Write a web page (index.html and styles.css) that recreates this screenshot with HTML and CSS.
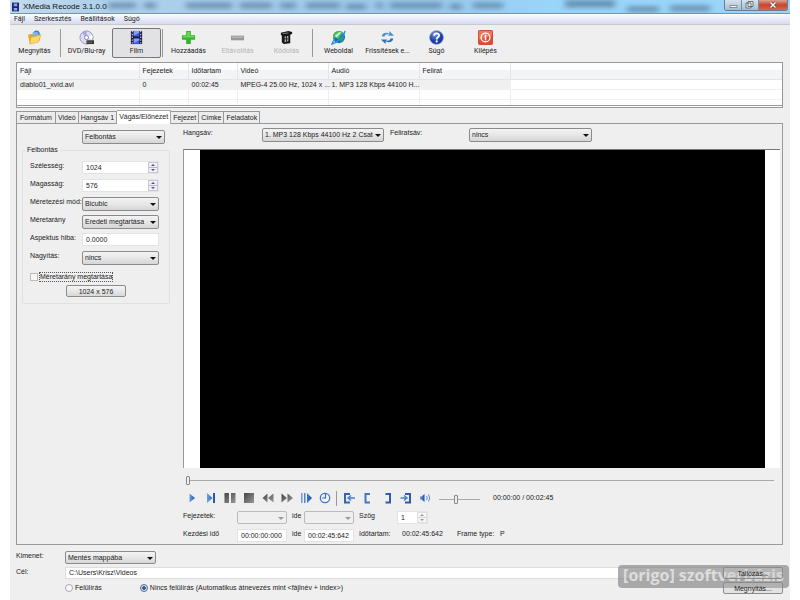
FILE: index.html
```html
<!DOCTYPE html>
<html lang="hu">
<head>
<meta charset="utf-8">
<title>XMedia Recode 3.1.0.0</title>
<link rel="stylesheet" href="styles.css">
</head>
<body>
<svg class="defs" aria-hidden="true">
  <defs>
    <linearGradient id="blue" x1="0" x2="1"><stop offset="0" stop-color="#6da2e4"/><stop offset="1" stop-color="#1d4fa5"/></linearGradient>
    <linearGradient id="gray" x1="0" x2="1" y2="1"><stop offset="0" stop-color="#444"/><stop offset="1" stop-color="#999"/></linearGradient>
    <radialGradient id="ball" cx=".4" cy=".25"><stop offset="0" stop-color="#7c9be8"/><stop offset="1" stop-color="#1b3ba2"/></radialGradient>
  </defs>
</svg>
<div class="window">
  <header class="titlebar">
    <svg class="glass" preserveAspectRatio="none" viewBox="0 0 780 14" aria-hidden="true">
      <g class="smudge">
        <path d="M98 6h28M134 6h12M176 6h46M230 6h32M270 6h16M296 6h34M336 7h20M366 6h7M380 6h52M440 7h12M463 6h30"/>
        <path class="wide" d="M555 4h50"/><path d="M617 10h32M660 9h40"/>
      </g>
    </svg>
    <svg class="app-icon" viewBox="0 0 8 10"><path fill="#17266e" d="M0 0h8v10H0z"/><path fill="#8fa4ec" d="M2 1h4v3H2zM2 6h4v3H2z"/></svg>
    <h1>XMedia Recode 3.1.0.0</h1>
    <div class="caption">
      <button aria-label="Kis méret"><svg viewBox="0 0 16 10"><path d="M5 5.500h7v2H5z" fill="#fff" stroke="#666" stroke-width=".7"/></svg></button>
      <button aria-label="Előző méret"><svg viewBox="0 0 16 10"><path d="M6 1.500h5v5H6zM4 3h5v5H4z" fill="#eee" stroke="#555" stroke-width=".8"/></svg></button>
      <button class="close" aria-label="Bezárás"><svg viewBox="0 0 16 10"><path d="M5.500 2.500l5 5m0-5l-5 5" stroke="#633" stroke-width="2.500"/><path d="M5.500 2.500l5 5m0-5l-5 5" stroke="#fff" stroke-width="1.500"/></svg></button>
    </div>
  </header>
  <nav class="menu"><button>Fájl</button><button>Szerkesztés</button><button>Beállítások</button><button>Súgó</button></nav>
  <div class="toolbar">
    <button><svg viewBox="0 0 16 16"><path d="M1 5l5-1 1 1 6-1 1 7-11 4z" fill="#e3a92e"/><path d="M6 2l6-1 2 8-7 2z" fill="#75b8e8"/><path d="M4 8l11-3-3 8-9 2z" fill="#ffd867" stroke="#d39c2a" stroke-width=".5"/><path d="M8 2c3-2 5 0 5 3" stroke="#2e7fb9" stroke-width="1.500" fill="none"/></svg>Megnyitás</button>
    <i class="sep"></i>
    <button><svg viewBox="0 0 16 16"><circle cx="8" cy="8" r="7" fill="#dcdcf2" stroke="#9595bd"/><path d="M8 8L3 3a7 7 0 0 1 5-2z" fill="#a5a5e8"/><path d="M8 8l6-3a7 7 0 0 1 0 5z" fill="#fff"/><circle cx="8" cy="8" r="2.200" fill="#fff" stroke="#777fb0"/><path d="M8 11h8v4H8z" fill="#333"/><path d="M9 13h6" stroke="#aaa" stroke-dasharray="1"/></svg>DVD/Blu-ray</button>
    <button class="active"><svg viewBox="0 0 16 16"><path d="M2 1h12v14H2z" fill="#111638"/><path d="M5 1h6v6H5zM5 9h6v6H5z" fill="#3b5be6"/><path d="M5 1h6v2L5 6zM5 9h6v2l-6 3z" fill="#859cf6"/><path d="M3.500 1v14m9-14v14" stroke="#ddd" stroke-width="1.200" stroke-dasharray="1.500 1.500"/></svg>Film</button>
    <i class="sep"></i>
    <button><svg viewBox="0 0 16 16"><path d="M5.500 1h5v4.500H15v5h-4.500V15h-5v-4.500H1v-5h4.500z" fill="#34b52e"/><path d="M6.500 2h3v4.500H14V8H2V6.500h4.500z" fill="#68d957"/></svg>Hozzáadás</button>
    <button disabled><svg viewBox="0 0 16 16"><path d="M1 6h14v5H1z" fill="#999"/><path d="M2 7h12v1.500H2z" fill="#b7b7b7"/></svg>Eltávolítás</button>
    <button disabled><svg viewBox="0 0 16 16"><path d="M2 3l8-2 4 1v2l-2 1v9l-7 1-2-2V6L2 5z" fill="#161616"/><path d="M6 7l4-1v6l-4 1z" fill="#aaa"/><path d="M8 6v7M5 9.500h5" stroke="#222"/><path d="M4 4l6-1" stroke="#888" fill="none"/></svg>Kódolás</button>
    <i class="sep"></i>
    <button><svg viewBox="0 0 16 16"><circle cx="8.500" cy="7.500" r="6.500" fill="#1870b8"/><path d="M4 3c3-3 7-2 9 0l-3 3-2 4-3-2-3 1c0-3 1-5 2-6z" fill="#51be54"/><path d="M10 9l4-2c0 4-2 6-4 7z" fill="#2a9d68"/><path d="M4 6l5-4 2 1-5 5z" fill="#b9f0d8"/><path d="M15 1C14 7 6 14 1 15c1-3 2-4 3-5" fill="none" stroke="#2696da" stroke-width="1.500"/></svg>Weboldal</button>
    <button><svg viewBox="0 0 16 16"><path d="M2 7c0-4 5-5 8-3V1l5 5h-7l2-1C7 4 5 5 5 7z" fill="#4591da"/><path d="M14 9c0 4-5 5-8 3v3l-5-5h7l-2 1c3 1 5 0 5-2z" fill="#286fb9"/></svg>Frissítések e...</button>
    <button><svg viewBox="0 0 16 16"><circle cx="8" cy="8" r="7.300" fill="url(#ball)" stroke="#6d82bf" stroke-width=".7"/><path d="M5.500 6.200C5.500 2.800 11 3 10.700 6 10.500 8 8.200 7.700 8.200 10" fill="none" stroke="#fff" stroke-width="1.900"/><circle cx="8.200" cy="12.200" r="1.200" fill="#fff"/></svg>Súgó</button>
    <button><svg viewBox="0 0 16 16"><rect x=".5" y=".5" width="15" height="15" rx="1" fill="#e24c31" stroke="#c74831"/><path d="M1 1h14v5L1 10z" fill="#ef765a"/><circle cx="8" cy="8" r="4.700" fill="none" stroke="#fff" stroke-width="1.400"/><path d="M8 5v6" stroke="#fff" stroke-width="1.600"/></svg>Kilépés</button>
  </div>
  <main>
    <div class="files">
      <table>
        <colgroup><col class="c-file"><col class="c-small"><col class="c-small"><col class="c-wide"><col class="c-wide"><col class="c-wide"><col></colgroup>
        <thead><tr><th>Fájl</th><th>Fejezetek</th><th>Időtartam</th><th>Videó</th><th>Audió</th><th>Felirat</th><th></th></tr></thead>
        <tbody>
          <tr class="picked"><td>diablo01_xvid.avi</td><td>0</td><td>00:02:45</td><td>MPEG-4 25.00 Hz, 1024 x ...</td><td>1. MP3 128 Kbps 44100 H...</td><td></td><td></td></tr>
          <tr><td></td><td></td><td></td><td></td><td></td><td></td><td></td></tr>
          <tr><td></td><td></td><td></td><td></td><td></td><td></td><td></td></tr>
        </tbody>
      </table>
    </div>
    <div class="tabs" role="tablist">
      <button role="tab">Formátum</button><button role="tab">Videó</button><button role="tab">Hangsáv 1</button><button role="tab" class="current" aria-selected="true">Vágás/Előnézet</button><button role="tab">Fejezet</button><button role="tab">Címke</button><button role="tab">Feladatok</button>
    </div>
    <section class="page">
      <aside>
        <span class="drop mode"><select aria-label="Beállítás"><option>Felbontás</option></select></span>
        <fieldset>
          <legend>Felbontás</legend>
          <div class="form">
            <label for="w">Szélesség:</label><span class="spin"><input id="w" value="1024"><i></i></span>
            <label for="h">Magasság:</label><span class="spin"><input id="h" value="576"><i></i></span>
            <label for="m">Méretezési mód:</label><span class="drop"><select id="m"><option>Bicubic</option></select></span>
            <label for="r">Méretarány</label><span class="drop"><select id="r"><option>Eredeti megtartása</option></select></span>
            <label for="a">Aspektus hiba:</label><input id="a" value="0.0000">
            <label for="z">Nagyítás:</label><span class="drop"><select id="z"><option>nincs</option></select></span>
          </div>
          <label class="keep"><input type="checkbox"><span>Méretarány megtartása</span></label>
          <button class="push size">1024 x 576</button>
        </fieldset>
      </aside>
      <div class="preview">
        <div class="tracks">
          <label for="au">Hangsáv:</label><span class="drop"><select id="au"><option>1. MP3 128 Kbps 44100 Hz 2 Csatorna</option></select></span>
          <label for="su">Feliratsáv:</label><span class="drop"><select id="su"><option>nincs</option></select></span>
        </div>
        <div class="video"><div></div></div>
        <input class="seek" type="range" value="0" aria-label="Pozíció">
        <div class="player">
          <button aria-label="Lejátszás"><svg viewBox="0 0 14 12"><path d="M4.500 1.500L10 6l-5.500 4.500z" fill="url(#blue)"/></svg></button>
          <button aria-label="Következő képkocka"><svg viewBox="0 0 14 12"><path d="M3 1l5.500 5L3 11zM9 1h2v10H9z" fill="url(#blue)"/></svg></button>
          <button aria-label="Szünet"><svg viewBox="0 0 14 12"><path d="M1.500 1H6v10H1.500zM8 1h4.500v10H8z" fill="url(#gray)"/></svg></button>
          <button aria-label="Leállítás"><svg viewBox="0 0 14 12"><path d="M2 1h10v10H2z" fill="url(#gray)"/></svg></button>
          <button aria-label="Vissza"><svg viewBox="0 0 14 12"><path d="M6.500 1.500v9L1.500 6zM12.500 1.500v9L7 6z" fill="url(#gray)"/></svg></button>
          <button aria-label="Előre"><svg viewBox="0 0 14 12"><path d="M1.500 1.500v9L7 6zM7.500 1.500v9L13 6z" fill="url(#gray)"/></svg></button>
          <button aria-label="Lassítás"><svg viewBox="0 0 14 12"><path d="M2 1h1.500v10H2zM5 1h1.500v10H5zM8 1l5 5-5 5z" fill="url(#blue)"/></svg></button>
          <button aria-label="Idő"><svg viewBox="0 0 14 12"><circle cx="7" cy="6" r="4.700" fill="#f3f7ff" stroke="#4373bf" stroke-width="1.300"/><path d="M7.500 1.500V6H4" fill="none" stroke="#3568b9" stroke-width="1.200"/></svg></button>
          <i class="sep"></i>
          <button aria-label="Ugrás a kezdetre"><svg viewBox="0 0 14 12"><path d="M8 2H3v8.500h5" fill="none" stroke="#3467b2" stroke-width="2"/><path d="M13 6H6m3-2.500L6 6l3 2.500" fill="none" stroke="#4d80cc" stroke-width="1.500"/></svg></button>
          <button aria-label="Kezdőpont"><svg viewBox="0 0 14 12"><path d="M9 2H4.500v8.500H9" fill="none" stroke="#4277c4" stroke-width="2"/></svg></button>
          <button aria-label="Végpont"><svg viewBox="0 0 14 12"><path d="M5.500 2H10v8.500H5.500" fill="none" stroke="#2f5ca8" stroke-width="2"/></svg></button>
          <button aria-label="Ugrás a végére"><svg viewBox="0 0 14 12"><path d="M6 2h5v8.500H6" fill="none" stroke="#2f5ca8" stroke-width="2"/><path d="M1.500 6H8M5 3.500L8 6 5 8.500" fill="none" stroke="#4d80cc" stroke-width="1.500"/></svg></button>
          <button aria-label="Hangerő"><svg viewBox="0 0 14 12"><path d="M2 4.500h1.500l3-2.500v8l-3-2.500H2z" fill="url(#blue)"/><path d="M8.500 4q1.500 2 0 4M10.500 2.500q2.500 3.500 0 7" fill="none" stroke="#5b8cd2"/></svg></button>
          <input class="volume" type="range" value="40" aria-label="Hangerő szintje">
          <span class="clock">00:00:00 / 00:02:45</span>
        </div>
        <div class="cuts">
          <label for="c1">Fejezetek:</label><span class="drop off"><select id="c1" disabled></select></span>
          <label for="c2">ide</label><span class="drop off"><select id="c2" disabled></select></span>
          <label for="ang">Szög</label><span class="spin off"><input id="ang" value="1"><i></i></span>
          <span></span><span></span>
          <label for="t1">Kezdési idő</label><input id="t1" value="00:00:00:000">
          <label for="t2">ide</label><input id="t2" value="00:02:45:642">
          <span>Időtartam:</span><span>00:02:45:642</span><span>Frame type:</span><span>P</span>
        </div>
      </div>
    </section>
    <footer>
      <label for="out">Kimenet:</label><span class="drop out"><select id="out"><option>Mentés mappába</option></select></span>
      <label for="dst">Cél:</label><div class="target"><input id="dst" value="C:\Users\Krisz\Videos"><button class="push">Tallózás...</button></div>
      <span></span><div class="modes"><label><input type="radio" name="o">Felülírás</label><label><input type="radio" name="o" checked>Nincs felülírás (Automatikus átnevezés mint &lt;fájlnév + index&gt;)</label><button class="push">Megnyitás...</button></div>
    </footer>
  </main>
  <div class="watermark">[origo] szoftverbázis</div>
</div>
</body>
</html>
```
FILE: styles.css
```css
* { box-sizing: border-box; }
body { margin: 0; background: #fff; color: #222; font: 7px/10px "Liberation Sans", sans-serif; }
button, input, select { font: inherit; color: inherit; margin: 0; padding: 0; border: 0; background: none; border-radius: 0; }
.defs { position: absolute; width: 0; height: 0; }
.window { position: relative; display: flex; flex-direction: column; min-height: 100vh; margin: 0 10px; background: #efefef; }

.titlebar { position: relative; display: flex; align-items: center; height: 14px; padding-left: 2px; border-bottom: 1px solid #7793aa; background: linear-gradient(90deg, #c2dbee, #aed0eb 12%, #9bc9ec 55%, #99d5fb 70%, #9bd4f7); }
.glass { position: absolute; inset: 0; width: 100%; height: 100%; overflow: hidden; }
.smudge { fill: none; stroke: #587f9f; stroke-width: 6; filter: blur(3px); opacity: .8; }
.smudge .wide { stroke-width: 8; }
.app-icon { position: relative; width: 7px; height: 10px; }
h1 { position: relative; flex: 1; margin: 0 0 0 4px; font: 8px/12px "Liberation Sans", sans-serif; color: #111; }
.caption { position: relative; align-self: flex-start; display: flex; height: 11px; margin-right: 2px; border: 1px solid #6b7d8e; border-top: 0; border-radius: 0 0 3px 3px; overflow: hidden; }
.caption button { width: 17px; background: linear-gradient(#d5e3ef, #a6bdd0); border-right: 1px solid #788b9c; }
.caption .close { width: 28px; border: 0; background: linear-gradient(#dfa196, #c9432c 50%, #d36a50); }
.caption svg { display: block; width: 16px; height: 10px; margin: 0 auto; }

.menu { display: flex; gap: 8px; height: 11px; padding-left: 4px; border-top: 1px solid #fff; border-bottom: 1px solid #c8c8cf; background: linear-gradient(#f7f8fd, #d6dbf0); font: 7px/9px Roboto, sans-serif; }
.toolbar { display: flex; align-items: center; height: 37px; padding: 2px 0 3px; font: 7px/10px Roboto, sans-serif; }
.toolbar button { display: flex; flex-direction: column; align-items: center; justify-content: center; gap: 1px; width: 49px; height: 30px; white-space: nowrap; }
.toolbar svg { width: 15px; height: 15px; }
.toolbar .active { margin-left: 1px; border: 1px solid #777; border-radius: 2px; background: #e2e2e4; }
.toolbar :disabled { color: #b5b5b5; }
.sep { width: 1px; height: 28px; margin: 0 1px; background: #999; }

.menu button { margin-right: 1px; }

main { flex: 1; display: flex; flex-direction: column; padding: 0 7px 6px 6px; }
.files { height: 46px; border: 1px solid #999; border-bottom: 3px double #999; background: #fff; overflow: hidden; }
table { width: 100%; table-layout: fixed; border-collapse: collapse; }
.c-file { width: 122px; }
.c-small { width: 49px; }
.c-wide { width: 91px; }
th, td { height: 10px; padding: 0 0 0 3px; border-right: 1px solid #eee; border-bottom: 1px solid #f0f0f0; font-weight: 400; line-height: 9px; text-align: left; white-space: nowrap; }
th { height: 16px; background: linear-gradient(#fff 45%, #f3f4f5 46%); border-color: #e3e5e8; }
.picked td:not(:last-child) { background: #f0f0f0; }
th:last-child, td:last-child { border-right: 0; }

.tabs { display: flex; align-items: flex-end; height: 14px; margin-top: 1px; }
.tabs button { height: 12px; padding: 0 2px; border: 1px solid #999; border-left-width: 0; border-bottom: 0; background: #ececec; white-space: nowrap; }
.tabs button:first-child { padding: 0 3px; border-left-width: 1px; }
.tabs .current { height: 14px; margin-bottom: -1px; padding-bottom: 2px; background: #fff; border-color: #aaa; position: relative; }
.page { flex: 1; display: flex; gap: 13px; padding: 4px 2px 2px 5px; border: 1px solid #999; }

aside { width: 148px; display: flex; flex-direction: column; }
.drop { position: relative; display: block; height: 14px; }
.drop select { display: block; appearance: none; width: 100%; height: 100%; padding: 0 10px 0 2px; border: 1px solid #8b8b8b; border-radius: 2px; background: linear-gradient(#f3f3f3, #e7e7e7 50%, #d6d6d6); opacity: 1; overflow: hidden; }
.drop::after { content: ""; position: absolute; right: 3px; top: 6px; border: 3px solid transparent; border-top-color: #111; border-bottom: 0; pointer-events: none; }
.drop.off select { border-color: #bbb; background: #efefef; }
.drop.off::after { border-top-color: #999; }
.mode { width: 83px; margin: 2px 0 0 60px; }
fieldset { margin: 1px 0 0; padding: 6px 10px 6px 7px; border: 1px solid #e1e1e1; border-radius: 2px; min-width: 0; }
legend { padding: 0 2px; margin-left: -5px; }
.form { display: grid; grid-template-columns: 52px 1fr; grid-auto-rows: 14px; row-gap: 4px; }
.form label { white-space: nowrap; }
input:not([type]) { width: 100%; height: 13px; padding: 0 3px; border: 1px solid #e3e3e3; background: #fff; min-width: 0; }
.spin { position: relative; display: block; height: 13px; }
.spin i { position: absolute; right: 1px; top: 1px; width: 10px; height: 11px; border: 1px solid #c8c8d4; background: linear-gradient(#eef 45%, #b8b8c8 46%, #b8b8c8 54%, #eef 55%); }
.spin i::before, .spin i::after { content: ""; position: absolute; left: 2px; border: 2px solid transparent; }
.spin i::before { top: 1px; border-bottom-color: #557; border-top: 0; }
.spin i::after { bottom: 1px; border-top-color: #557; border-bottom: 0; }
.spin.off i { filter: grayscale(1) opacity(.6); }
.keep { display: flex; align-items: center; gap: 2px; margin-top: 8px; }
.keep input { appearance: none; width: 8px; height: 8px; border: 1px solid #bbb; background: #f6f6f6; }
.keep span { outline: 1px dotted #555; line-height: 8px; white-space: nowrap; }
.push { border: 1px solid #8b8b8b; border-radius: 2px; background: linear-gradient(#f5f5f5, #e8e8e8 50%, #d7d7d7); height: 12px; width: 60px; line-height: 9px; }
.size { display: block; margin: 4px 0 0 36px; }

.preview { flex: 1; min-width: 0; display: flex; flex-direction: column; }
.tracks { display: grid; grid-template-columns: 79px 122px 85px 123px; height: 21px; }
.tracks label:nth-of-type(2) { padding-left: 6px; }
.video { flex: 1; min-height: 200px; padding: 0 15px 0 16px; border-top: 1px solid #777; border-left: 1px solid #999; background: #fff; display: flex; }
.video div { flex: 1; background: #000; }
input[type="range"] { appearance: none; background: linear-gradient(#aaa, #aaa) center / 100% 1px no-repeat; }
input[type="range"]::-webkit-slider-thumb { appearance: none; width: 4px; height: 9px; border: 1px solid #888; border-radius: 1px; background: #eee; }
.seek { width: auto; height: 9px; margin: 8px 6px 5px 3px; }
.player { display: flex; align-items: center; height: 16px; margin-left: -1px; }
.player button { width: 19px; height: 14px; }
.player svg { display: block; width: 14px; height: 12px; margin: 0 auto; }
.player .sep { height: 15px; margin: 0 2px; }
.volume { width: 41px; height: 9px; margin: 2px 13px 0 5px; }
.cuts { display: grid; grid-template-columns: 54px 50px 17px 50px 43px 55px 43px auto; grid-auto-rows: 13px; row-gap: 5px; justify-content: start; margin-top: 5px; white-space: nowrap; }
.cuts > :nth-child(3), .cuts > :nth-child(5), .cuts > :nth-child(11), .cuts > :nth-child(n+13) { padding-left: 5px; }
.cuts .drop { height: 13px; }
.cuts .spin { width: 31px; justify-self: start; }

footer { display: grid; grid-template-columns: 49px 1fr; grid-template-rows: 13px 12px 12px; row-gap: 3px; margin-top: 6px; }
.out { width: 91px; height: 13px; }
.target { display: flex; border: 1px solid #ddd; background: #fff; }
.target input:not([type]) { height: 10px; border: 0; }
.target .push, .modes .push { position: relative; z-index: 1; flex: none; margin: -1px; background: rgba(200, 200, 200, .3); }
.modes { display: flex; align-items: center; gap: 38px; }
.modes label { display: flex; align-items: center; gap: 2px; white-space: nowrap; }
.modes input { appearance: none; width: 8px; height: 8px; border: 1px solid #aaa; border-radius: 50%; background: #f8f8f8; }
.modes input:checked { border-color: #668; background: radial-gradient(#16609c 35%, #cfe0f0 50%); }
.modes .push { margin: 0 0 0 auto; }
.watermark { position: absolute; right: 1px; bottom: 12px; width: 171px; height: 23px; border-radius: 4px; background: rgba(120, 120, 120, .6); color: rgba(235, 235, 235, .8); font: bold 16px/21px "Open Sans", sans-serif; text-align: center; white-space: nowrap; pointer-events: none; }
```
